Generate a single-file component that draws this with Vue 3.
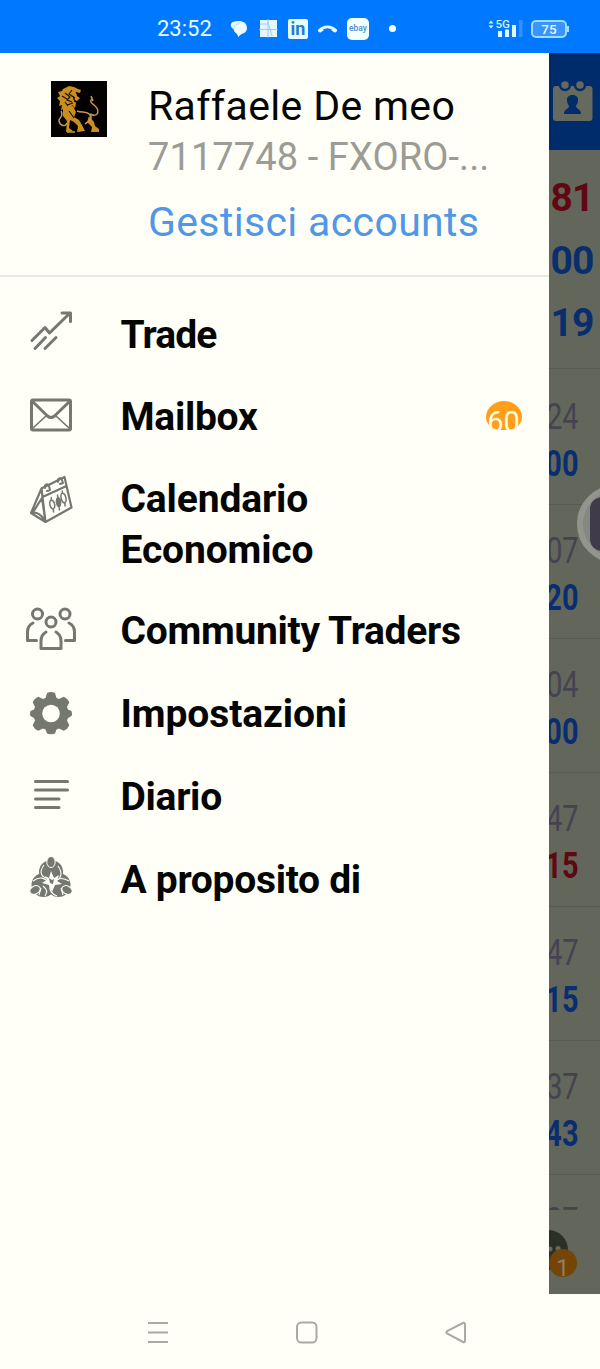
<template>
  <div class="screen">
    <header class="status-bar">
      <span class="clock">23:52</span>
      <div class="status-icons">
        <svg class="chat" width="18" height="18" viewBox="0 0 18 18">
          <path d="M8.500 1C13.500 1 17 3.600 17 8c0 3.500-2.600 5.500-5.500 6L8.300 17 7 14C4.500 12.500 4 11 3.500 9 1.500 8 .6 6 .8 4.200 1.600 2 4.500 1 8.500 1z" fill="#e9fbff" />
          <path d="M4 8.500c0-3 1.800-4.800 5.500-4.900" fill="none" stroke="#9cccff" stroke-width=".8" />
        </svg>
        <svg class="tiles" width="19" height="19" viewBox="0 0 19 19">
          <path d="M1 1h17v17H1z" fill="#e3f7ff" />
          <path d="M9 0v19M0 10.500h19M9 3l4 14M1 5h8" fill="none" stroke="#8fc0f2" stroke-width=".8" />
        </svg>
        <span class="linkedin">in</span>
        <svg class="call" width="21" height="10" viewBox="0 0 21 10">
          <path d="M3.200 6C6.500 1.900 14.500 1.900 17.800 6" fill="none" stroke="#e9fbff" stroke-width="2.800" />
          <path d="M1 5.500l4-2 1.700 2.700-3.200 2.300C1.500 8.500.5 7 1 5.500zM20 5.500l-4-2-1.700 2.700 3.200 2.300C19.500 8.500 20.500 7 20 5.500z" fill="#e9fbff" />
        </svg>
        <span class="ebay">ebay</span>
        <span class="dot"></span>
      </div>
      <div class="system-icons">
        <svg width="36" height="20" viewBox="0 0 36 20">
          <path d="M.5 4.500L3 1.500l2.500 3zM.5 6.500L3 9.500l2.500-3z" fill="#d5f2ff" />
          <text x="7.500" y="9" class="net">5G</text>
          <path d="M10 12h4v6h-4zM17 10.500h4V18h-4zM24 6h4v12h-4z" fill="#dff6ff" />
          <path d="M31 1h3.500v17H31z" fill="#368fff" />
        </svg>
        <div class="battery">75</div>
      </div>
    </header>

    <main class="body">
      <aside class="drawer">
        <section class="account">
          <svg class="avatar" width="56" height="56" viewBox="0 0 56 56">
            <rect width="56" height="56" fill="#030200" />
            <g fill="#c98d20">
              <path d="M12 8l6-3 5 1 4 2 3 1-1 3-4-1 1 4 3 2-3 3-4-2 3 4-1 5-3-3-1 5-3-2-1 4-3-3-3 1 1-5-3 1 1-5-3-3 3-2-2-4 4-1z" />
              <path d="M12 28l10-3 3 6-2 5 5 3 3 5 3 6-8 1 1-6-4-4-4-2-1 8 4 3-7 1 1-11-4-5z" />
              <path d="M38 35l5 6 1 4 4 3v3h-8l1-5-5-5z" />
            </g>
            <g fill="none" stroke="#c99854" stroke-width="1.500">
              <path d="M26 30c5 2 10 0 13 4s-1 6-5 9M39 33c8 4 11-3 4-9-4-3-4-4-2-6" />
              <path d="M40 15l2 5M10 30c3 5-1 6-2 9 0 5 6 8 8 3M16 51h8" />
            </g>
            <path d="M14 12l5 4-3 3 5 2M21 9l-3 4 6 4M16 24l6-2M25 11l2 3M18 30l5 7M11 15l5 3M14 21l3 4M22 15l2 6" fill="none" stroke="#171000" stroke-width="1.100" />
          </svg>
          <div class="account-text">
            <div class="name">Raffaele De meo</div>
            <div class="number">7117748 - FXORO-...</div>
            <a class="manage">Gestisci accounts</a>
          </div>
        </section>

        <nav class="menu">
          <div v-for="item in items" :key="item.icon" class="menu-item" :class="item.icon">
            <svg class="icon" width="52" height="52" viewBox="0 0 52 52">
              <g v-if="item.icon === 'trade'" class="line">
                <path d="M7 33.500L20 20.500l4.500 5.500L44 7M37 6h8.500v8.500M10 41.500l10.500-11M20 41.500l11-11" />
              </g>
              <g v-else-if="item.icon === 'mail'" class="line">
                <rect x="6.500" y="10" width="39" height="30" rx="1.500" />
                <path d="M7.500 11.500L22.500 26q3.500 3 7 0L44.500 11.500" />
                <path d="M8 38l13-12M44 38L31 26" stroke-width="1.700" />
              </g>
              <g v-else-if="item.icon === 'calendar'" class="line thin">
                <path d="M16.500 17.500L39.500 6l7 30.500-26 14.500zM17.500 26l24-11M16.500 17.500L6 42l14.500 9L17 27 7.500 42M6 42c6-2 10 2 13 6" />
                <path d="M20 17c-1-4 3-5 4-2l1 4-3 1M33 11c-1-4 3-5 4-2l1 3-3 1" stroke-width="2" />
                <path d="M26.500 29c3.500 1 4.500 8 1.500 9-3.500-1-4.500-8-1.500-9zM26.300 26.500v2.500M28.500 38v3M37.500 22c3.500 1 5 9 2 10-3.500-1-5-9-2-10zM37.300 20v2M40 32v3" stroke-width="1.500" />
                <path d="M33 26c3 2 3.500 8 1 10-3-2-3.500-7-1-10zM32.500 24l2 15" fill="#74786f" stroke-width="1.500" />
              </g>
              <g v-else-if="item.icon === 'community'" class="line">
                <circle cx="12.500" cy="10" r="5" />
                <circle cx="26" cy="18" r="5" />
                <circle cx="40" cy="10" r="5" />
                <path d="M8 19c-4 2-5.500 5-5.500 9v8.500h9M44 19c4 2 5.500 5 5.500 9v8.500h-9M21 28c-3.500 2-5 5-5 9v7.500h20V37c0-4-1.500-7-5-9" />
              </g>
              <g v-else-if="item.icon === 'settings'" class="solid">
                <path d="M22 6q4-2 8 0l1.500 5 2.500 1 4.700-2.300q4 1.500 5.600 5.600L42 20l1 2.500 3.500 1.500q1 2.500 0 5L43 31l-1 2.500 2.300 4.700q-1.600 4-5.600 5.600L34 41.500l-2.500 1L30 46.500q-4 1.500-8 0l-1.500-4-2.500-1-4.700 2.300q-4-1.600-5.600-5.600L10 33.500 9 31l-3.500-2q-1-2.500 0-5L9 22.500l1-2.500-2.300-4.700q1.600-4.100 5.600-5.600L18 12l2.500-1z" />
                <circle cx="26" cy="26.500" r="8.800" fill="#fffff8" />
              </g>
              <g v-else-if="item.icon === 'journal'" class="line">
                <path d="M10.500 12.500h32M10.500 21h32M10.500 30h23.500M10.500 38.500h23.500" />
              </g>
              <g v-else class="solid">
                <circle cx="26" cy="20" r="12" />
                <circle cx="18.500" cy="33" r="12" />
                <circle cx="33.500" cy="33" r="12" />
                <g stroke="#fffff8" stroke-width="1">
                  <ellipse cx="26" cy="10" rx="4.200" ry="5.500" />
                  <ellipse cx="10" cy="38" rx="5.500" ry="4" transform="rotate(-28 10 38)" />
                  <ellipse cx="42" cy="38" rx="5.500" ry="4" transform="rotate(28 42 38)" />
                </g>
                <g fill="none" stroke="#fffff8" stroke-width="1.100">
                  <path d="M19 13c-5 7-3 11 2 13M33 14c5 7 3 12-1 14M8 29c8-6 12-2 17 2M44 29c-8-5-12-2-15 2M20 44c3-4 2-7-2-10M32 44c-5-2-8-6-7-11M14 43l2-7M38 43l-2-7" />
                </g>
                <path d="M20 24l4 2 2-7 3 7 5-3-2 6 5 3-7 1-3 7-3-7-7-2 5-3z" fill="#fffff8" />
                <path d="M24 26l3 2 2-1-1 5-3-1z" />
              </g>
            </svg>
            <span class="label">{{ item.label }}</span>
            <span v-if="item.badge" class="badge">{{ item.badge }}</span>
          </div>
        </nav>
      </aside>

      <section class="quotes">
        <div class="toolbar">
          <svg width="40" height="42" viewBox="0 0 40 42">
            <rect y="6" width="39.500" height="35" rx="3" fill="#66695e" />
            <g fill="#66695e" stroke="#002c6c" stroke-width="2.500">
              <circle cx="12" cy="5" r="5" />
              <circle cx="27" cy="5" r="5" />
            </g>
            <path d="M19.500 15c4 0 6 2.500 5.500 6-.3 2.500-1.500 3.500-2 5 0 3 5 3 5 8H11c0-5 5-5 5-8-.5-1.500-1.700-2.500-2-5-.5-3.500 1.500-6 5.500-6z" fill="#002c6c" />
          </svg>
        </div>
        <div class="totals">
          <span class="red">81</span>
          <span>00</span>
          <span>19</span>
        </div>
        <div class="rows">
          <div v-for="(row, i) in rows" :key="i" class="row">
            <span class="price">{{ row.price }}</span>
            <span class="profit" :class="{ red: row.loss }">{{ row.profit }}</span>
          </div>
        </div>
        <div class="footer">
          <svg width="52" height="84" viewBox="0 0 52 84">
            <circle cx="-1" cy="40" r="20" fill="#2b3025" />
            <circle cx="1" cy="39" r="2.500" fill="#66695e" />
            <circle cx="9" cy="38.500" r="2.500" fill="#66695e" />
            <circle cx="14" cy="53" r="14" fill="#744507" />
            <text x="7" y="66" class="count">1</text>
          </svg>
        </div>
        <div class="bubble"><div class="bubble-inner"></div></div>
      </section>
    </main>

    <footer class="nav-bar">
      <svg width="22" height="23" viewBox="0 0 22 23">
        <path d="M1 2h20M1 11.500h20M1 21h20" />
      </svg>
      <svg width="22" height="23" viewBox="0 0 22 23">
        <rect x="1" y="1.500" width="19.500" height="20" rx="4.500" />
      </svg>
      <svg width="22" height="23" viewBox="0 0 22 23">
        <path d="M2 10.200L18 2q2-.7 2 1.500v16q0 2.200-2 1.500L2 12.500q-1.300-1.200 0-2.300z" />
      </svg>
    </footer>
  </div>
</template>

<script setup>
const items = [
  { icon: "trade", label: "Trade" },
  { icon: "mail", label: "Mailbox", badge: 60 },
  { icon: "calendar", label: "Calendario Economico" },
  { icon: "community", label: "Community Traders" },
  { icon: "settings", label: "Impostazioni" },
  { icon: "journal", label: "Diario" },
  { icon: "about", label: "A proposito di" },
];

const rows = [
  { price: "24", profit: "00" },
  { price: "07", profit: "20" },
  { price: "04", profit: "00" },
  { price: "47", profit: "15", loss: true },
  { price: "47", profit: "15" },
  { price: "37", profit: "43" },
  { price: "27", profit: "00" },
];
</script>

<style>
body {
  background: #fffff8;
}
</style>

<style scoped>
.screen {
  width: 600px;
  height: 1369px;
  display: flex;
  flex-direction: column;
  overflow: hidden;
  background: #fffff8;
  font-family: Roboto, sans-serif;
}

.screen svg {
  display: block;
  flex: none;
}

.status-bar {
  height: 53px;
  flex: none;
  box-sizing: border-box;
  padding: 4px 33px 0 157px;
  display: flex;
  align-items: center;
  background: #0078ff;
  color: #e9fbff;
}

.clock {
  width: 73px;
  font-size: 22px;
}

.status-icons {
  flex: 1;
  display: flex;
  align-items: center;
}

.tiles {
  margin-left: 11px;
}

.linkedin {
  width: 20px;
  height: 20px;
  margin-left: 10px;
  border-radius: 2px;
  background: #e9fbff;
  color: #247bd8;
  font-size: 18px;
  font-weight: 700;
  line-height: 20px;
  text-align: center;
}

.call {
  margin-left: 9px;
}

.ebay {
  width: 22px;
  height: 22px;
  margin-left: 9px;
  border-radius: 5px;
  background: #f2ffff;
  color: #4f8ece;
  font-size: 8.5px;
  font-weight: 500;
  line-height: 20px;
  text-align: center;
}

.dot {
  width: 7px;
  height: 7px;
  margin-left: 20px;
  border-radius: 50%;
  background: #f2ffff;
}

.system-icons {
  display: flex;
  align-items: center;
  gap: 7px;
}

.net {
  font-size: 11.5px;
  font-weight: 500;
  fill: #d5f2ff;
}

.battery {
  position: relative;
  width: 36px;
  height: 18px;
  box-sizing: border-box;
  border: 2px solid #9edcff;
  border-radius: 5px;
  background: #3994ff;
  color: #e9fbff;
  font-size: 13.5px;
  font-weight: 500;
  line-height: 15px;
  text-align: center;
}

.battery::after {
  content: "";
  position: absolute;
  top: 4px;
  right: -4px;
  width: 2px;
  height: 6px;
  background: #9edcff;
}

.body {
  height: 1241px;
  flex: none;
  display: flex;
}

.drawer {
  width: 548.5px;
  flex: none;
}

.account {
  height: 224px;
  box-sizing: border-box;
  padding: 28px 0 0 51px;
  display: flex;
  border-bottom: 2px solid #e7e8e2;
}

.account-text {
  margin: -3px 0 0 41px;
  white-space: nowrap;
}

.name {
  font-size: 41px;
  line-height: 56px;
  letter-spacing: 0.35px;
  color: #050604;
}

.number {
  font-size: 38px;
  line-height: 46px;
  letter-spacing: 0.1px;
  color: #9b9c95;
}

.manage {
  display: block;
  margin-top: 18px;
  font-size: 41px;
  line-height: 48px;
  letter-spacing: 0.35px;
  color: #5297e5;
}

.menu {
  padding: 32.5px 26px 0 25px;
  display: flex;
  flex-direction: column;
  gap: 31.8px;
}

.menu-item {
  display: flex;
  align-items: flex-start;
}

.menu-item.calendar,
.menu-item.community {
  margin-top: -1.3px;
}

.icon {
  margin: -2.5px 0 -3.5px;
}

.line {
  fill: none;
  stroke: #74786f;
  stroke-width: 3;
  stroke-linecap: round;
  stroke-linejoin: round;
}

.line.thin {
  stroke-width: 2.2;
}

.solid {
  fill: #74786f;
}

.label {
  width: 360px;
  margin-left: 43.5px;
  font-size: 39px;
  font-weight: 700;
  line-height: 51px;
  letter-spacing: -0.3px;
  color: #050604;
}

.trade .label {
  letter-spacing: -0.9px;
}

.calendar .label {
  width: 240px;
  letter-spacing: -0.15px;
}

.settings .label {
  letter-spacing: -0.1px;
}

.badge {
  width: 36px;
  height: 29px;
  margin: 9px 0 0 5px;
  box-sizing: border-box;
  padding-top: 3px;
  overflow: hidden;
  border-radius: 18px 18px 14px 14px / 16px 16px 13px 13px;
  background: #ff9e18;
  color: #fffbe0;
  font-size: 29px;
  line-height: 36px;
  text-align: center;
}

.quotes {
  position: relative;
  flex: 1;
  min-width: 0;
  overflow: hidden;
  display: flex;
  flex-direction: column;
  background: #63665b;
}

.toolbar {
  height: 97px;
  flex: none;
  box-sizing: border-box;
  padding: 27px 0 0 4px;
  background: #002c6c;
}

.totals {
  height: 219px;
  flex: none;
  box-sizing: border-box;
  padding: 17px 0 0 2px;
  display: flex;
  flex-direction: column;
  border-bottom: 1px solid #575b52;
  font-size: 39px;
  font-weight: 700;
  line-height: 62.5px;
  letter-spacing: -1px;
  color: #092e6c;
}

.rows {
  height: 841px;
  flex: none;
  padding-top: 1.5px;
  box-sizing: border-box;
  overflow: hidden;
}

.row {
  height: 134px;
  box-sizing: border-box;
  padding: 22.9px 21.5px 0 0;
  display: flex;
  flex-direction: column;
  align-items: flex-end;
  border-bottom: 1px solid #575b52;
  font-size: 37px;
  line-height: 47px;
}

.price,
.profit {
  transform: scaleX(0.78);
  transform-origin: right;
}

.price {
  color: #464350;
}

.profit {
  font-weight: 700;
  color: #092e70;
}

.totals .red,
.profit.red {
  color: #600812;
}

.count {
  font-size: 24px;
  fill: #8b7d68;
}

.bubble {
  position: absolute;
  top: 432px;
  left: 28px;
  width: 66px;
  height: 66px;
  border: 6px solid #92958d;
  border-radius: 50%;
  background: #858880;
}

.bubble-inner {
  width: 54px;
  height: 54px;
  margin: 6px 0 0 7px;
  border-radius: 12px;
  background: #403b4b;
}

.nav-bar {
  flex: 1;
  padding: 1px 133px 0 147px;
  display: flex;
  justify-content: space-between;
  align-items: center;
}

.nav-bar path,
.nav-bar rect {
  fill: none;
  stroke: #a9aaa3;
  stroke-width: 2;
}
</style>
